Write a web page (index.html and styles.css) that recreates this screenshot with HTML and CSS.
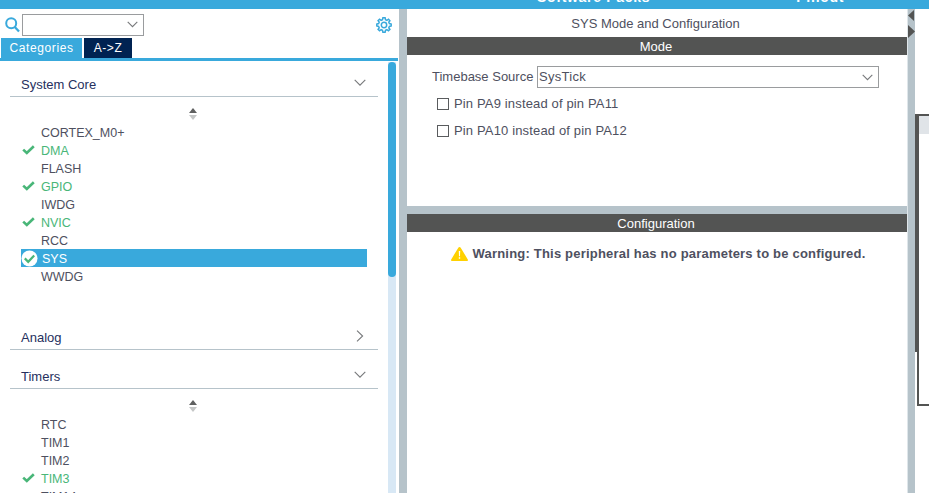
FILE: index.html
```html
<!DOCTYPE html>
<html lang="en">
<head>
<meta charset="UTF-8" />
<title>SYS Mode and Configuration</title>
<link rel="stylesheet" href="styles.css">
</head>
<body>
  <div class="topbar">
    <span class="top-link top-software">Software Packs</span>
    <span class="top-link top-pinout">Pinout</span>
  </div>

  <div class="main">
    <div class="left-panel">
      <div class="search-row">
        <svg class="search-icon" width="15" height="16" viewBox="0 0 15 16">
          <circle cx="6.2" cy="6.2" r="5" fill="none" stroke="#39a9dc" stroke-width="2" />
          <path d="M9.8 10 L14 14.6" fill="none" stroke="#39a9dc" stroke-width="2.2" />
        </svg>
        <div class="combo search-combo">
          <svg class="chevron" width="11" height="7" viewBox="0 0 11 7"><path d="M0.7 0.8 L5.5 5.6 L10.3 0.8" /></svg>
        </div>
        <svg class="gear-icon" width="16" height="16" viewBox="0 0 16 16">
          <circle cx="8" cy="8" r="2.7" fill="none" stroke="#39a9dc" stroke-width="1.5" />
          <path d="M6.9 0.8 H9.1 L9.5 2.7 L10.9 3.3 L12.5 2.2 L13.9 3.7 L12.8 5.2 L13.4 6.6 L15.2 7 V9 L13.4 9.4 L12.8 10.8 L13.9 12.3 L12.4 13.8 L10.9 12.7 L9.5 13.3 L9.1 15.2 H6.9 L6.5 13.3 L5.1 12.7 L3.6 13.8 L2.1 12.3 L3.2 10.8 L2.6 9.4 L0.8 9 V7 L2.6 6.6 L3.2 5.2 L2.1 3.7 L3.6 2.2 L5.1 3.3 L6.5 2.7 Z" fill="none" stroke="#39a9dc" stroke-width="1.5" />
        </svg>
      </div>

      <div class="tabs">
        <div class="tab tab-active">Categories</div>
        <div class="tab tab-dark">A-&gt;Z</div>
      </div>

      <div class="left-body">
        <div class="sections">
          <div class="section">
            <div class="section-head">
              <span>System Core</span>
              <svg class="chevron" width="12" height="8" viewBox="0 0 12 8"><path d="M0.7 0.8 L6 6.2 L11.3 0.8" /></svg>
            </div>
            <div class="sort">
              <svg width="8" height="12" viewBox="0 0 8 12"><path d="M4 0 L8 5 H0 Z" fill="#5f6060" /><path d="M0 7 H8 L4 12 Z" fill="#c4c6c6" /></svg>
            </div>
            <div class="item">CORTEX_M0+</div>
            <div class="item item-ok"><svg class="check" width="13" height="10" viewBox="0 0 13 10"><path d="M1.2 4.6 L4.8 8 L11.8 1.2" /></svg>DMA</div>
            <div class="item">FLASH</div>
            <div class="item item-ok"><svg class="check" width="13" height="10" viewBox="0 0 13 10"><path d="M1.2 4.6 L4.8 8 L11.8 1.2" /></svg>GPIO</div>
            <div class="item">IWDG</div>
            <div class="item item-ok"><svg class="check" width="13" height="10" viewBox="0 0 13 10"><path d="M1.2 4.6 L4.8 8 L11.8 1.2" /></svg>NVIC</div>
            <div class="item">RCC</div>
            <div class="item item-selected">
              <svg class="check-round" width="17" height="17" viewBox="0 0 17 17">
                <circle cx="8.5" cy="8.5" r="8" fill="#fff" />
                <path d="M3.8 8.4 L7.2 11.8 L13.2 5.4" fill="none" stroke="#49b678" stroke-width="2.2" />
              </svg>SYS
            </div>
            <div class="item">WWDG</div>
          </div>

          <div class="section section-closed">
            <div class="section-head">
              <span>Analog</span>
              <svg class="chevron chevron-right" width="8" height="12" viewBox="0 0 8 12"><path d="M1 0.7 L6.6 6 L1 11.3" /></svg>
            </div>
          </div>

          <div class="section">
            <div class="section-head">
              <span>Timers</span>
              <svg class="chevron" width="12" height="8" viewBox="0 0 12 8"><path d="M0.7 0.8 L6 6.2 L11.3 0.8" /></svg>
            </div>
            <div class="sort">
              <svg width="8" height="12" viewBox="0 0 8 12"><path d="M4 0 L8 5 H0 Z" fill="#5f6060" /><path d="M0 7 H8 L4 12 Z" fill="#c4c6c6" /></svg>
            </div>
            <div class="item">RTC</div>
            <div class="item">TIM1</div>
            <div class="item">TIM2</div>
            <div class="item item-ok"><svg class="check" width="13" height="10" viewBox="0 0 13 10"><path d="M1.2 4.6 L4.8 8 L11.8 1.2" /></svg>TIM3</div>
            <div class="item">TIM14</div>
          </div>
        </div>
        <div class="scroll-track"><div class="scroll-thumb"></div></div>
      </div>
    </div>

    <div class="splitter"></div>

    <div class="center-panel">
      <div class="mode-box">
        <div class="panel-title">SYS Mode and Configuration</div>
        <div class="dark-head">Mode</div>
        <div class="field-row">
          <span class="field-label">Timebase Source</span>
          <div class="combo mode-combo">
            <span class="combo-value">SysTick</span>
            <svg class="chevron" width="11" height="7" viewBox="0 0 11 7"><path d="M0.7 0.8 L5.5 5.6 L10.3 0.8" /></svg>
          </div>
        </div>
        <div class="check-row"><span class="checkbox"></span>Pin PA9 instead of pin PA11</div>
        <div class="check-row"><span class="checkbox"></span>Pin PA10 instead of pin PA12</div>
      </div>
      <div class="band"></div>
      <div class="dark-head">Configuration</div>
      <div class="warning">
        <svg width="17" height="14" viewBox="0 0 17 14">
          <path d="M8.5 0 C9 0 9.4 0.3 9.7 0.8 L16.8 12.4 C17.2 13.2 16.8 14 15.9 14 H1.1 C0.2 14 -0.2 13.2 0.2 12.4 L7.3 0.8 C7.6 0.3 8 0 8.5 0 Z" fill="#ffd100" />
          <path d="M7.8 4 H9.2 L9 9.2 H8 Z M7.8 10.2 H9.2 V11.8 H7.8 Z" fill="#fff" />
        </svg>
        <span>Warning: This peripheral has no parameters to be configured.</span>
      </div>
    </div>

    <div class="splitter splitter-right">
      <svg width="7" height="29" viewBox="0 0 7 29">
        <path d="M6 1 V12 L0 6.5 Z" fill="#535453" />
        <path d="M0 16 L7 22.5 L0 29 Z" fill="#535453" />
      </svg>
    </div>

    <div class="pinout-area">
      <div class="pinout-box">
        <div class="pinout-stub"></div>
        <div class="pinout-head"></div>
      </div>
    </div>
  </div>
</body>
</html>
```

FILE: styles.css
```css
* {
  margin: 0; padding: 0; box-sizing: border-box;
}
html, body {
  height: 100%;
}
body {
  font-family: "Liberation Sans", Arial, sans-serif;
  font-size: 13px;
  color: #4e5060;
  background: #fff;
  display: flex;
  flex-direction: column;
  overflow: hidden;
}
.topbar {
  height: 9px;
  background: #39a9dc;
  display: flex;
  overflow: hidden;
  flex-shrink: 0;
}
.top-link {
  color: #fff;
  font-weight: bold;
  font-size: 14px;
  line-height: 16px;
  margin-top: -11px;
  letter-spacing: 0.7px;
}
.top-software {
  margin-left: 537px;
}
.top-pinout {
  margin-left: 146px;
}
.main {
  flex: 1;
  display: flex;
  min-height: 0;
}

/* left side */
.left-panel {
  width: 399px;
  flex-shrink: 0;
  display: flex;
  flex-direction: column;
  overflow: hidden;
}
.search-row {
  display: flex;
  align-items: center;
  height: 29px;
  padding: 2px 7px 0 5px;
}
.search-icon {
  margin-right: 2px;
}
.combo {
  border: 1px solid #9a9c9e;
  height: 22px;
  display: flex;
  align-items: center;
  justify-content: space-between;
}
.search-combo {
  width: 122px;
  padding-right: 5px;
  justify-content: flex-end;
}
.gear-icon {
  margin-left: auto;
}
.chevron path {
  fill: none;
  stroke: #77797b;
  stroke-width: 1.1;
}
.tabs {
  display: flex;
  gap: 2px;
  padding-left: 1px;
  height: 20px;
  flex-shrink: 0;
}
.tab {
  color: #fff;
  font-size: 12px;
  line-height: 20px;
  letter-spacing: 0.6px;
  text-align: center;
}
.tab-active {
  width: 81px;
  background: #39a9dc;
}
.tab-dark {
  width: 48px;
  background: #002352;
}
.left-body {
  flex: 1;
  min-height: 0;
  display: flex;
  border-top: 3px solid #39a9dc;
  margin-right: 1px;
}
.sections {
  width: 388px;
  padding-top: 9px;
  overflow: hidden;
}
.section {
  padding-bottom: 26px;
  margin-bottom: 12px;
}
.section-closed {
  padding-bottom: 0;
}
.section-head {
  height: 27px;
  margin-left: 10px;
  width: 368px;
  padding: 2px 12px 0 11px;
  border-bottom: 1px solid #b6c3ca;
  display: flex;
  align-items: center;
  justify-content: space-between;
  color: #26305e;
  font-size: 13px;
}
.chevron-right {
  margin-right: 2px;
}
.section-head .chevron {
  margin-top: -3px;
}
.sort {
  height: 26px;
  padding: 11px 0 3px 189px;
}
.sort svg {
  display: block;
}
.item {
  height: 18px;
  line-height: 20px;
  font-size: 12.5px;
  padding-left: 41px;
  position: relative;
}
.item-ok {
  color: #49b678;
}
.check {
  position: absolute;
  left: 22px;
  top: 4px;
}
.check path {
  fill: none;
  stroke: #49b678;
  stroke-width: 2.6;
}
.item-selected {
  margin: 0 21px;
  padding-left: 21px;
  background: #39a9dc;
  color: #fff;
}
.check-round {
  position: absolute;
  left: 0;
  top: 1px;
}
.scroll-track {
  width: 8px;
  margin-top: 1px;
  background: #d8e8f5;
}
.scroll-thumb {
  height: 215px;
  background: #39a9dc;
  border-radius: 4px;
}

.splitter {
  width: 8px;
  flex-shrink: 0;
  background: #b6c3ca;
}

/* middle */
.center-panel {
  width: 500px;
  flex-shrink: 0;
}
.mode-box {
  height: 197px;
}
.panel-title {
  height: 28px;
  line-height: 29px;
  padding-right: 3px;
  font-size: 13px;
  text-align: center;
}
.dark-head {
  height: 18px;
  line-height: 20px;
  padding-right: 2px;
  background: #535453;
  color: #fff;
  font-size: 13px;
  text-align: center;
}
.field-row {
  display: flex;
  align-items: center;
  padding-left: 25px;
  margin-top: 11px;
  font-size: 13px;
}
.field-label {
  width: 105px;
  padding-bottom: 2px;
}
.mode-combo {
  width: 342px;
  padding: 0 5px 0 1px;
  letter-spacing: 0.3px;
}
.combo-value {
  padding-bottom: 2px;
}
.check-row {
  display: flex;
  align-items: center;
  height: 27px;
  padding-left: 30px;
  font-size: 13px;
  letter-spacing: 0.15px;
}
.field-row + .check-row {
  margin-top: 2px;
}
.checkbox {
  width: 12px;
  height: 12px;
  border: 1px solid #5a5c5e;
  margin-right: 5px;
}
.band {
  height: 8px;
  background: #b6c3ca;
}
.warning {
  display: flex;
  align-items: center;
  justify-content: center;
  gap: 5px;
  margin-top: 14px;
  padding-left: 2px;
  font-weight: bold;
  font-size: 13px;
  letter-spacing: 0.2px;
}

/* right edge */
.splitter-right {
  border-left: 1px solid #dfe6ea;
}
.splitter-right svg {
  display: block;
}
.pinout-area {
  flex: 1;
  padding-top: 105px;
}
.pinout-box {
  height: 292px;
  margin-left: 2px;
  border-left: 2px solid #535453;
  border-top: 2px solid #535453;
  border-bottom: 2px solid #535453;
  position: relative;
}
.pinout-stub {
  position: absolute;
  left: -4px;
  top: -2px;
  width: 2px;
  height: 238px;
  background: #535453;
}
.pinout-head {
  height: 18px;
  background: #e0e4e8;
}
```
